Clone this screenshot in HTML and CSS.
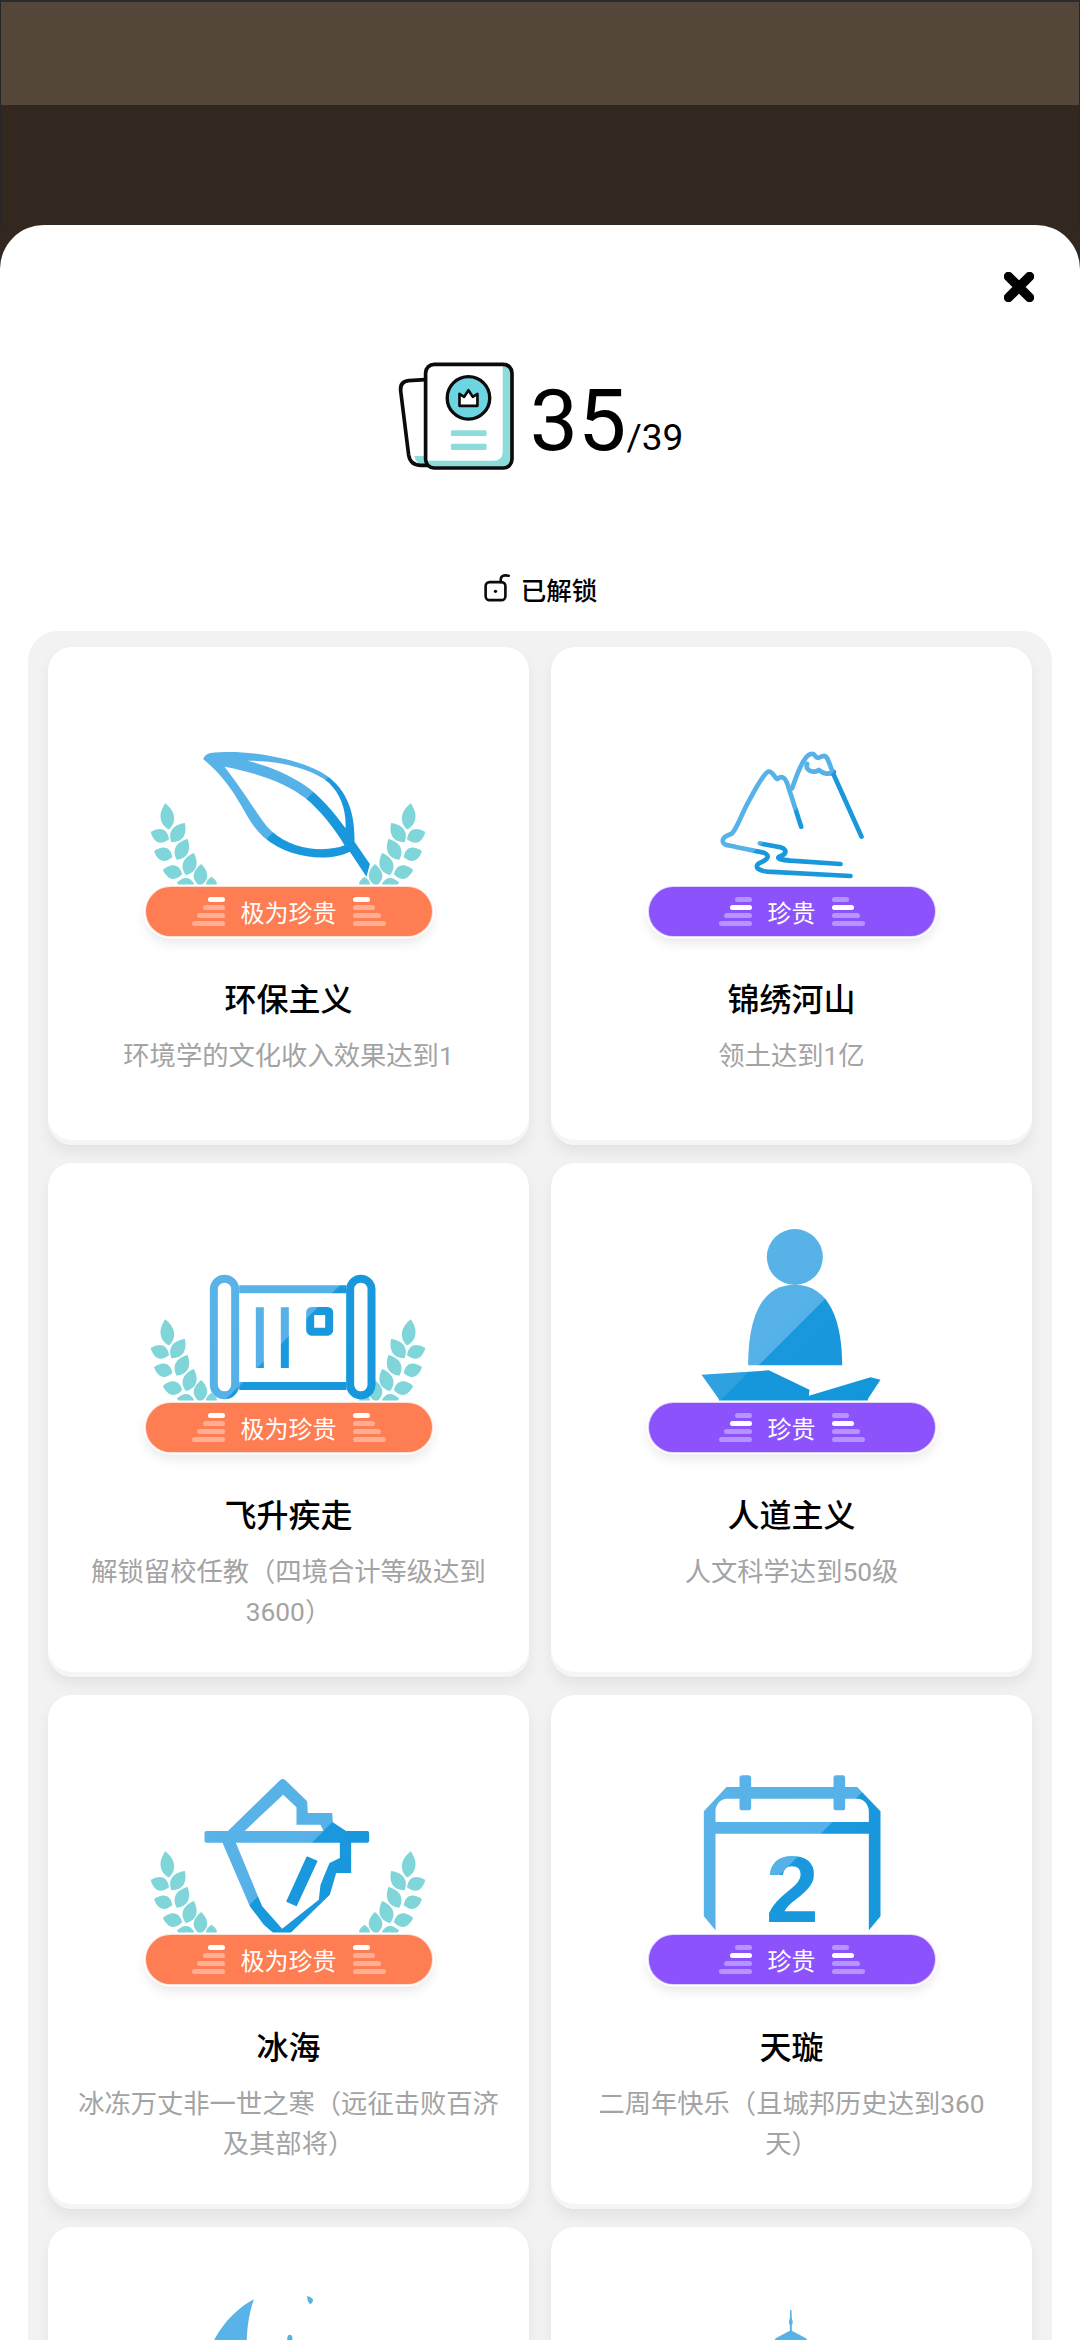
FILE: index.html
```html
<!DOCTYPE html>
<html lang="zh-CN">
<head>
<meta charset="utf-8">
<title>成就</title>
<link rel="stylesheet" href="styles.css">
</head>
<body>
<svg class="defs" aria-hidden="true">
  <defs>
    <linearGradient id="gA" gradientUnits="userSpaceOnUse" x1="0" y1="0" x2="1000" y2="1000">
      <stop offset="0" stop-color="#5cb5e9"/><stop offset=".381" stop-color="#55b1e7"/><stop offset=".384" stop-color="#1a98dd"/><stop offset="1" stop-color="#1295db"/>
    </linearGradient>
    <linearGradient id="gB" gradientUnits="userSpaceOnUse" x1="0" y1="0" x2="1000" y2="1000">
      <stop offset="0" stop-color="#5cb5e9"/><stop offset=".424" stop-color="#55b1e7"/><stop offset=".427" stop-color="#1a98dd"/><stop offset="1" stop-color="#1295db"/>
    </linearGradient>
    <linearGradient id="gC" gradientUnits="userSpaceOnUse" x1="0" y1="0" x2="1000" y2="1000">
      <stop offset="0" stop-color="#5cb5e9"/><stop offset=".395" stop-color="#55b1e7"/><stop offset=".398" stop-color="#1a98dd"/><stop offset="1" stop-color="#1295db"/>
    </linearGradient>
    <linearGradient id="gD" gradientUnits="userSpaceOnUse" x1="0" y1="0" x2="1000" y2="1000">
      <stop offset="0" stop-color="#32a3e2"/><stop offset=".419" stop-color="#2ea1e1"/><stop offset=".422" stop-color="#1697dc"/><stop offset="1" stop-color="#1295db"/>
    </linearGradient>
    <path id="lf" d="M0,40 C-29,18 -25,-14 0,-40 C25,-14 29,18 0,40Z"/>
    <g id="laurel" fill="#7fd5d8">
      <use href="#lf" transform="translate(110,289) rotate(-8)"/>
      <use href="#lf" transform="translate(88,347) rotate(-68) scale(1,.74)"/>
      <use href="#lf" transform="translate(143,338) rotate(35) scale(1,.88)"/>
      <use href="#lf" transform="translate(98,402) rotate(-72) scale(1,.72)"/>
      <use href="#lf" transform="translate(155,388) rotate(28) scale(1,.88)"/>
      <use href="#lf" transform="translate(126,456) rotate(-78) scale(1,.74)"/>
      <use href="#lf" transform="translate(178,432) rotate(20) scale(1,.88)"/>
      <use href="#lf" transform="translate(210,465) rotate(4) scale(1,.82)"/>
      <use href="#lf" transform="translate(165,490) rotate(-85) scale(.8,.65)"/>
      <use href="#lf" transform="translate(243,490) rotate(0) scale(.8,.5)"/>
    </g>
  </defs>
</svg>

<div class="backdrop"><div class="band"></div></div>

<main class="sheet">
  <div class="close-row">
    <svg class="close" viewBox="0 0 30 30"><path d="M4.5 4.5 25.500 25.500M25.500 4.500 4.500 25.500"/></svg>
  </div>

  <header class="summary">
    <svg class="summary-icon" viewBox="50 65 355 328">
      <path class="ink-fill" d="M135,118 L85,121 Q58,124 61,152 L85,345 Q90,376 122,376 L150,376 Z"/>
      <path class="teal" d="M102,348 L137,348 L142,372 L122,372 Q108,372 102,348Z"/>
      <path class="ink-line" d="M135,118 L85,121 Q58,124 61,152 L85,345 Q90,376 122,376 L150,376"/>
      <rect class="paper" x="136" y="72" width="260" height="312" rx="26"/>
      <path class="teal" d="M368,76 L378,76 Q392,78 392,100 L392,360 Q390,380 368,380 L155,380 Q140,380 140,362 L340,362 Q368,362 368,335 Z"/>
      <rect class="ink-line" x="136" y="72" width="260" height="312" rx="26"/>
      <circle class="badge-disc" cx="265" cy="173" r="64"/>
      <path class="crown" d="M238,161 L252,170 L265,150 L278,170 L292,161 L292,197 L238,197 Z"/>
      <rect class="teal" x="212" y="270" width="108" height="18" rx="5"/>
      <rect class="teal" x="212" y="311" width="108" height="19" rx="5"/>
    </svg>
    <div class="count"><span class="count-main">35</span><span class="count-total">/39</span></div>
  </header>

  <div class="status">
    <svg class="lock" viewBox="310 700 85 90">
      <rect x="318" y="727" width="60" height="55" rx="12"/>
      <path d="M364,727 L364,717 Q366,703 388,708"/>
      <circle cx="348" cy="755" r="5"/>
    </svg>
    <span>已解锁</span>
  </div>

  <section class="panel">
    <article class="card">
      <svg class="art" viewBox="-4.500 -30 960 528">
        <use href="#laurel"/><use href="#laurel" transform="translate(945,0) scale(-1,1)"/>
        <path fill="url(#gA)" fill-rule="evenodd" d="M218,118 Q224,101 240,99 C350,85 520,118 590,168 C645,208 674,270 672,365 L718,432 L708,470 L658,395 C600,425 480,420 400,352 C360,315 345,275 322,240 C300,200 260,150 218,118Z M350,122 C455,122 550,150 595,188 C630,222 648,270 645,325 C610,275 565,225 525,197 C470,160 405,135 350,122Z M282,140 C380,158 470,190 525,235 C570,272 612,325 642,376 C590,397 490,393 425,335 C390,305 370,255 282,140Z"/>
      </svg>
      <div class="badge rare-high">
        <div class="stairs left hi-1"><i></i><i></i><i></i><i></i></div>
        <span>极为珍贵</span>
        <div class="stairs right hi-1"><i></i><i></i><i></i><i></i></div>
      </div>
      <h2>环保主义</h2>
      <p>环境学的文化收入效果达到1</p>
    </article>

    <article class="card">
      <svg class="art" viewBox="4.500 -30 960 528">
        <g fill="none" stroke="url(#gA)" stroke-width="14" stroke-linecap="round" stroke-linejoin="round">
          <path d="M693,350 L610,165 C595,130 592,105 578,108 C566,112 562,120 550,103 C530,95 510,130 485,205"/>
          <path d="M530,132 C522,150 548,162 565,150 C578,162 598,165 610,155"/>
          <path d="M512,320 L470,190 C460,165 450,170 440,177 C430,172 426,150 412,155 C395,165 365,225 345,262 C330,292 320,322 305,340 C290,348 275,350 277,365 C280,378 300,375 320,382 L400,398 C422,408 410,420 385,430 C370,442 385,452 410,455 L660,468"/>
          <path d="M388,370 L450,382 C475,390 465,405 445,410 C438,418 460,420 480,422 L630,432"/>
        </g>
      </svg>
      <div class="badge rare">
        <div class="stairs left hi-2"><i></i><i></i><i></i><i></i></div>
        <span>珍贵</span>
        <div class="stairs right hi-2"><i></i><i></i><i></i><i></i></div>
      </div>
      <h2>锦绣河山</h2>
      <p>领土达到1亿</p>
    </article>

    <article class="card">
      <svg class="art" viewBox="-4.500 -30 960 528">
        <use href="#laurel"/><use href="#laurel" transform="translate(945,0) scale(-1,1)"/>
        <g transform="translate(0,11)">
          <g fill="none" stroke="url(#gA)" stroke-width="24">
            <rect x="250" y="117" width="64" height="350" rx="32"/>
            <rect x="659" y="117" width="64" height="350" rx="32"/>
            <path d="M326,149 L648,149 M326,439 L648,439"/>
            <path d="M388,203 L388,385 M463,203 L463,385"/>
            <rect x="539" y="214" width="57" height="62" rx="4"/>
          </g>
        </g>
      </svg>
      <div class="badge rare-high">
        <div class="stairs left hi-1"><i></i><i></i><i></i><i></i></div>
        <span>极为珍贵</span>
        <div class="stairs right hi-1"><i></i><i></i><i></i><i></i></div>
      </div>
      <h2>飞升疾走</h2>
      <p>解锁留校任教（四境合计等级达到3600）</p>
    </article>

    <article class="card">
      <svg class="art" viewBox="4.500 -30 960 528">
        <g transform="translate(0,-79)">
          <circle fill="url(#gB)" cx="493" cy="142" r="84"/>
          <path fill="url(#gB)" d="M353,467 C353,330 390,225 493,225 C600,225 635,340 635,467Z"/>
          <path fill="url(#gD)" d="M213,495 L415,482 L537,540 L535,558 L720,503 L750,510 L712,568 L712,577 L265,577 L265,568Z"/>
        </g>
      </svg>
      <div class="badge rare">
        <div class="stairs left hi-2"><i></i><i></i><i></i><i></i></div>
        <span>珍贵</span>
        <div class="stairs right hi-2"><i></i><i></i><i></i><i></i></div>
      </div>
      <h2>人道主义</h2>
      <p>人文科学达到50级</p>
    </article>

    <article class="card">
      <svg class="art" viewBox="-4.500 -30 960 528">
        <use href="#laurel"/><use href="#laurel" transform="translate(945,0) scale(-1,1)"/>
        <g transform="translate(0,-25)" fill="url(#gC)">
          <rect x="222" y="214" width="494" height="35" rx="6"/>
          <path fill-rule="evenodd" d="M290,216 L450,60 Q458,55 465,62 L530,125 L532,160 L605,160 L607,188 L650,216Z M340,216 L458,105 L498,143 L498,195 L570,195 L580,216Z"/>
          <path d="M275,247 L315,247 L395,440 L455,507 L565,420 L570,375 L597,310 L628,295 L628,247 L662,247 L662,340 L617,340 L598,405 L470,530 L440,530 L400,495 L358,440Z"/>
          <path d="M530,293 L558,305 L497,437 L470,425Z" stroke="url(#gC)" stroke-width="5" stroke-linejoin="round"/>
        </g>
      </svg>
      <div class="badge rare-high">
        <div class="stairs left hi-1"><i></i><i></i><i></i><i></i></div>
        <span>极为珍贵</span>
        <div class="stairs right hi-1"><i></i><i></i><i></i><i></i></div>
      </div>
      <h2>冰海</h2>
      <p>冰冻万丈非一世之寒（远征击败百济及其部将）</p>
    </article>

    <article class="card">
      <svg class="art" viewBox="4.500 -30 960 528">
        <g transform="translate(0,-25)" fill="url(#gC)">
          <path fill-rule="evenodd" d="M288,82 L680,82 L750,155 L750,470 L715,512 L715,222 L255,222 L255,512 L220,470 L220,155Z M290,117 L680,117 C700,117 715,135 715,155 L715,187 L255,187 L255,155 C255,135 270,117 290,117Z"/>
          <rect x="327" y="47" width="35" height="105" rx="8"/>
          <rect x="609" y="47" width="35" height="105" rx="8"/>
          <text class="cal-digit" x="485" y="488" text-anchor="middle">2</text>
        </g>
      </svg>
      <div class="badge rare">
        <div class="stairs left hi-2"><i></i><i></i><i></i><i></i></div>
        <span>珍贵</span>
        <div class="stairs right hi-2"><i></i><i></i><i></i><i></i></div>
      </div>
      <h2>天璇</h2>
      <p>二周年快乐（且城邦历史达到360天）</p>
    </article>

    <article class="card">
      <svg class="art" viewBox="-4.500 -30 960 528">
        <g fill="url(#gA)">
          <path d="M370,-2 C310,30 255,90 225,180 L350,180 C345,110 352,50 370,-2Z"/>
          <path d="M530,-12 Q545,-8 548,0 Q545,12 538,12 Q530,5 530,-12Z"/>
          <ellipse cx="478" cy="118" rx="8" ry="14"/>
        </g>
      </svg>
    </article>

    <article class="card">
      <svg class="art" viewBox="4.500 -30 960 528">
        <path fill="url(#gA)" d="M479,30 L483,30 L484,55 L487,66 L484,78 L484,92 L525,114 L540,130 L540,180 L422,180 L422,130 L437,114 L478,92 L478,78 L475,66 L478,55Z"/>
      </svg>
    </article>
  </section>
</main>
</body>
</html>
```
FILE: styles.css
```css
* { box-sizing: border-box; }

html, body {
  margin: 0;
  height: 2340px;
  overflow: hidden;
  background: #32281f;
}

body {
  font-family: Roboto, "Noto Sans CJK SC", sans-serif;
  color: #000;
}

.defs { position: absolute; width: 0; height: 0; }

.backdrop {
  height: 225px;
  border-top: 2px solid #2a2b30;
  border-left: 1px solid #262628;
  border-right: 1px solid #262628;
}
.band { height: 103px; background: #54473a; }

.sheet {
  background: #fff;
  border-radius: 44px 44px 0 0;
  height: 2115px;
  overflow: hidden;
}

.close-row {
  display: flex;
  justify-content: flex-end;
  padding: 47px 46px 0 0;
}
.close { width: 30px; height: 30px; display: block; }
.close path { fill: none; stroke: #000; stroke-width: 9.500; stroke-linecap: round; }

.summary {
  display: flex;
  justify-content: center;
  align-items: center;
  gap: 15px;
  margin-top: 60px;
  height: 109px;
}
.summary-icon { width: 118px; height: 109px; display: block; }
.summary-icon .paper { fill: #fff; }
.summary-icon .teal { fill: #8ddcdc; }
.summary-icon .ink-fill { fill: #fff; }
.summary-icon .ink-line { fill: none; stroke: #0b0b0b; stroke-width: 11; stroke-linejoin: round; stroke-linecap: round; }
.summary-icon .badge-disc { fill: #6dd5e2; stroke: #0b0b0b; stroke-width: 10; }
.summary-icon .crown { fill: #fff; stroke: #0b0b0b; stroke-width: 8; stroke-linejoin: round; }

.count { display: flex; align-items: baseline; line-height: 86px; margin-top: 8px; }
.count-main { font-size: 86px; }
.count-total { font-size: 37px; line-height: 37px; }

.status {
  display: flex;
  justify-content: center;
  align-items: center;
  gap: 10px;
  margin-top: 100px;
  height: 34px;
  font-size: 25.500px;
  font-weight: 500;
}
.lock { width: 28px; height: 30px; display: block; }
.lock rect, .lock path { fill: none; stroke: #0b0b0b; stroke-width: 8; stroke-linecap: round; }
.lock circle { fill: #0b0b0b; }

.panel {
  margin: 26px 28px 0;
  padding: 16px 20px;
  background: #f2f2f2;
  border-radius: 30px 30px 0 0;
  display: grid;
  grid-template-columns: 481px 481px;
  column-gap: 22px;
  row-gap: 18px;
  align-content: start;
}

.card {
  background: #fff;
  border-radius: 24px;
  min-height: 498px;
  padding: 63px 29px 45px;
  display: flex;
  flex-direction: column;
  align-items: center;
  text-align: center;
  box-shadow: inset 0 -5px 0 #f5f5f5, 0 1px 0 #e2e2e2, 0 8px 14px rgba(0, 0, 0, .06);
}

.art { width: 320px; height: 176px; display: block; flex: none; overflow: visible; }
.cal-digit { font-family: "Liberation Sans", sans-serif; font-weight: 700; font-size: 286px; }

.badge {
  width: 288px;
  height: 51px;
  flex: none;
  border-radius: 26px;
  display: flex;
  justify-content: center;
  align-items: center;
  gap: 16px;
  color: #fff;
  font-size: 24px;
  border: 1.500px solid rgba(255, 255, 255, .75);
  box-shadow: 0 0 0 1.500px #fff, 0 6px 12px rgba(0, 0, 0, .09);
}
.rare-high { background: #ff7d52; }
.rare { background: #8c52fb; }

.stairs { display: flex; flex-direction: column; gap: 3.300px; }
.stairs.left { align-items: flex-end; }
.stairs.right { align-items: flex-start; }
.stairs i { display: block; height: 5px; border-radius: 2.500px; background: rgba(255, 255, 255, .38); }
.stairs i:nth-child(1) { width: 17px; }
.stairs i:nth-child(2) { width: 22px; }
.stairs i:nth-child(3) { width: 28px; }
.stairs i:nth-child(4) { width: 33px; }
.stairs.hi-1 i:nth-child(1), .stairs.hi-2 i:nth-child(2) { background: #fff; }

.card h2 {
  margin: 41px 0 14px;
  font-size: 32px;
  line-height: 44px;
  font-weight: 500;
}
.card p {
  margin: 0;
  font-size: 26.300px;
  line-height: 40px;
  color: #a3a3a3;
}
```
